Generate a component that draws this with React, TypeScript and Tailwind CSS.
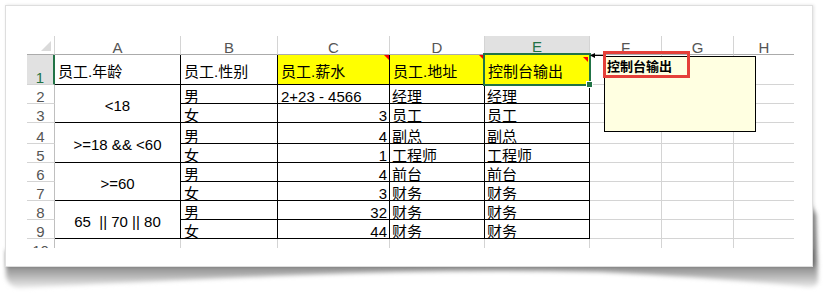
import React from 'react';

const COLS = ['A', 'B', 'C', 'D', 'E', 'F', 'G', 'H'];

type Row = { b: string; c: string; cLeft?: boolean; d: string; e: string };

const ROWS: Row[] = [
  { b: '男', c: '2+23 - 4566', cLeft: true, d: '经理', e: '经理' },
  { b: '女', c: '3', d: '员工', e: '员工' },
  { b: '男', c: '4', d: '副总', e: '副总' },
  { b: '女', c: '1', d: '工程师', e: '工程师' },
  { b: '男', c: '4', d: '前台', e: '前台' },
  { b: '女', c: '3', d: '财务', e: '财务' },
  { b: '男', c: '32', d: '财务', e: '财务' },
  { b: '女', c: '44', d: '财务', e: '财务' },
];

const MERGED: Record<number, string> = {
  0: '<18',
  2: '>=18 && <60',
  4: '>=60',
  6: '65  || 70 || 80',
};

const hdrCell =
  'flex items-end justify-center leading-[12px] text-[#555] border-r border-r-[#d4d4d4] border-b border-b-[#ababab]';
const rowHdr =
  'flex items-end justify-center leading-[12px] text-[#555] border-r border-r-[#bfbfbf] border-b border-b-[#d4d4d4]';
const dark = 'border-r border-b border-black whitespace-nowrap overflow-hidden';
const light = 'border-r border-b border-[#d4d4d4]';
const lightLast = 'border-b border-[#d4d4d4]';

function RedTri() {
  return (
    <div className="absolute top-0 right-0 w-0 h-0 border-t-[5px] border-t-[#ff0000] border-l-[5px] border-l-transparent" />
  );
}

export default function App() {
  return (
    <div className="relative w-[827px] h-[296px] bg-white overflow-hidden pt-[5px] pl-[5px] font-[family-name:Liberation_Sans,Noto_Sans_CJK_SC,sans-serif] text-[15px] text-black">
      {/* curled paper shadow */}
      <svg className="absolute left-0 top-0" width="827" height="296" viewBox="0 0 827 296">
        <defs>
          <linearGradient id="sh" x1="0" y1="262" x2="0" y2="292" gradientUnits="userSpaceOnUse">
            <stop offset="0" stopColor="#7a7a7a" />
            <stop offset="0.25" stopColor="#9a9a9a" />
            <stop offset="1" stopColor="#ffffff" />
          </linearGradient>
          <filter id="bl" x="-5%" y="-50%" width="110%" height="200%">
            <feGaussianBlur stdDeviation="2" />
          </filter>
        </defs>
        <path
          d="M6,250 L811,250 L811,205 L816,215 L818,282 Q815,290 800,286 Q720,278 600,272 Q450,269 300,275 Q130,282 22,288 Q9,289 6,276 Z"
          fill="url(#sh)"
          filter="url(#bl)"
        />
      </svg>
      <div className="relative w-[808px] h-[262px] bg-white border border-[#dedede] shadow-[1px_0_3px_rgba(0,0,0,0.12)] pl-[21px] pt-[30px]">
        <div className="relative overflow-hidden w-[767px] h-[212px] grid grid-cols-[28px_126px_97px_112px_95px_105px_72px_72px_60px] grid-rows-[19px_30px_19px_19px_21px_19px_19px_19px_19px_19px_9px]">
          {/* corner */}
          <div className="relative border-r border-r-[#d4d4d4] border-b border-b-[#ababab]">
            <svg className="absolute right-[3px] bottom-[3px]" width="10" height="10" viewBox="0 0 10 10">
              <polygon points="10,0 10,10 0,10" fill="#dadada" />
            </svg>
          </div>
          {COLS.map((c) =>
            c === 'E' ? (
              <div
                key={c}
                className="flex items-end justify-center leading-[12px] bg-[#e1e1e1] text-[#217346] border-r border-r-[#d4d4d4] border-b-2 border-b-[#217346]"
              >
                {c}
              </div>
            ) : c === 'H' ? (
              <div key={c} className="flex items-end justify-center leading-[12px] text-[#555] border-b border-b-[#ababab]">
                {c}
              </div>
            ) : (
              <div key={c} className={hdrCell}>
                {c}
              </div>
            )
          )}

          {/* row 1 */}
          <div className="flex items-end justify-center leading-[12px] bg-[#e1e1e1] text-[#217346] border-r-2 border-r-[#217346] border-b border-b-[#d4d4d4]">
            1
          </div>
          <div className={`${dark} flex items-center pt-[3px] pl-[3px] leading-[19px]`}>员工.年龄</div>
          <div className={`${dark} flex items-center pt-[3px] pl-[3px] leading-[19px]`}>员工.性别</div>
          <div className={`${dark} relative bg-[#ffff00] flex items-center pt-[3px] pl-[3px] leading-[19px]`}>
            员工.薪水
            <RedTri />
          </div>
          <div className={`${dark} relative bg-[#ffff00] flex items-center pt-[3px] pl-[3px] leading-[19px]`}>
            员工.地址
            <RedTri />
          </div>
          <div className={`${dark} relative bg-[#ffff00] flex items-center pt-[3px] pl-[3px] leading-[19px]`}>
            控制台输出
            <div className="absolute top-[2px] right-[1px] w-0 h-0 border-t-[5px] border-t-[#ff0000] border-l-[5px] border-l-transparent" />
          </div>
          <div className={light} />
          <div className={light} />
          <div className={lightLast} />

          {ROWS.map((r, i) => (
            <React.Fragment key={i}>
              <div className={rowHdr}>{i + 2}</div>
              {MERGED[i] !== undefined && (
                <div className={`${dark} row-span-2 flex items-center justify-center pt-[3px] leading-[19px] whitespace-pre`}>
                  {MERGED[i]}
                </div>
              )}
              <div className={`${dark} flex items-end pl-[3px] leading-[12px]`}>{r.b}</div>
              <div
                className={`${dark} flex items-end leading-[12px] ${r.cLeft ? 'justify-start pl-[3px]' : 'justify-end pr-[2px]'}`}
              >
                {r.c}
              </div>
              <div className={`${dark} flex items-end pl-[2px] leading-[12px]`}>{r.d}</div>
              <div className={`${dark} flex items-end pl-[2px] leading-[12px]`}>{r.e}</div>
              <div className={light} />
              <div className={light} />
              <div className={lightLast} />
            </React.Fragment>
          ))}

          {/* row 10 (cut off by the window edge) */}
          <div className="overflow-hidden border-r border-r-[#bfbfbf]">
            <div className="h-[18px] flex items-end justify-center leading-[12px] text-[#555]">10</div>
          </div>
          <div className="border-r border-[#d4d4d4]" />
          <div className="border-r border-[#d4d4d4]" />
          <div className="border-r border-[#d4d4d4]" />
          <div className="border-r border-[#d4d4d4]" />
          <div className="border-r border-[#d4d4d4]" />
          <div className="border-r border-[#d4d4d4]" />
          <div className="border-r border-[#d4d4d4]" />
          <div />

          {/* selection of E1 */}
          <div className="absolute left-[456px] top-[17px] w-[108px] h-[33px] border-2 border-[#217346]" />
          <div className="absolute left-[559px] top-[45px] w-[7px] h-[7px] bg-[#217346] border border-white" />

          {/* comment connector */}
          <svg className="absolute left-[560px] top-[15px]" width="18" height="9" viewBox="0 0 18 9">
            <polygon points="3,4.5 8,2 8,7" fill="#000" />
            <rect x="7" y="4" width="11" height="1" fill="#000" />
          </svg>

          {/* comment box */}
          <div className="absolute left-[577px] top-[20px] w-[152px] h-[76px] bg-[#ffffe1] border border-black">
            <div className="pl-[2px] pt-[2px] text-[13px] font-bold leading-[15px]">控制台输出</div>
          </div>
          <div className="absolute left-[576px] top-[15px] w-[87px] h-[27px] border-[3px] border-[#e5403a]" />
        </div>
      </div>
    </div>
  );
}
